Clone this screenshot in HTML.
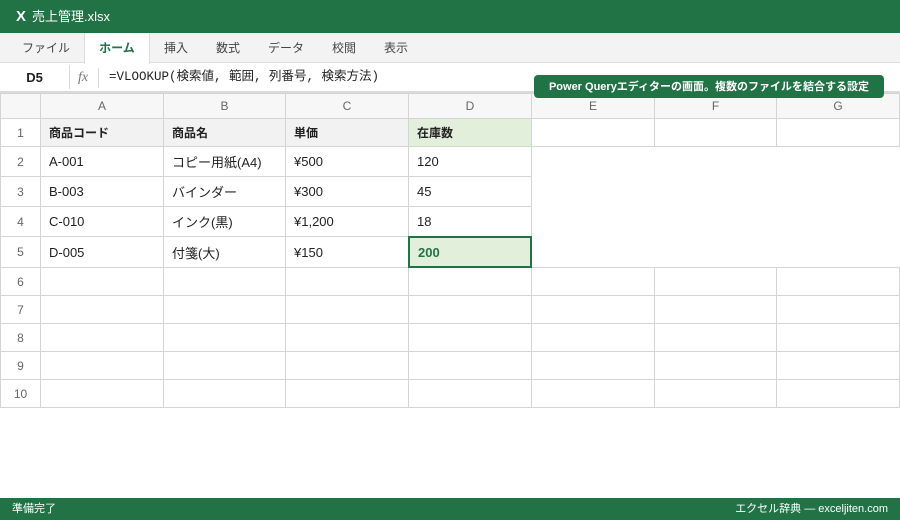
<!DOCTYPE html>
<html><head><meta charset="utf-8"><style>
*{margin:0;padding:0;box-sizing:border-box}
body{width:900px;height:520px;overflow:hidden;background:#fff;font-family:"Liberation Sans","Noto Sans CJK JP",sans-serif;position:relative;color:#222}
.title{position:absolute;left:0;top:0;width:900px;height:33px;background:#217346;color:#fff;font-size:13px;line-height:33px;padding-left:16px}
.title b{font-size:15px;margin-right:6px}
.tabs{position:absolute;top:33px;left:0;width:900px;height:30px;background:#f3f3f3;border-bottom:1px solid #dcdcdc;font-size:12px;color:#444}
.tab{position:absolute;top:0;height:30px;line-height:30px;text-align:center}
.tab.act{background:#fff;color:#217346;font-weight:bold;border-left:1px solid #dcdcdc;border-right:1px solid #dcdcdc;height:31px}
.fbar{position:absolute;top:63px;left:0;width:900px;height:30px;border-bottom:2px solid #dadada;font-size:13px;line-height:29px}
.nb{position:absolute;left:0;width:70px;text-align:center;font-weight:bold;border-right:1px solid #dadada;height:24px;top:2px;line-height:26px}
.fx{position:absolute;left:78px;font-style:italic;color:#777;font-family:"Liberation Serif",serif;font-size:14px}
.fxs{position:absolute;left:98px;top:5px;height:20px;border-left:1px solid #dadada}
.fm{position:absolute;left:109px;font-family:"Liberation Mono","Noto Sans CJK JP",monospace;font-size:12.5px}
.tip{position:absolute;left:534px;top:75px;width:350px;height:23px;background:#217346;color:#fff;border-radius:4px;font-size:11px;font-weight:bold;text-align:center;line-height:24px;z-index:5}
.c{position:absolute;border-right:1px solid #d4d4d4;border-bottom:1px solid #d4d4d4;font-size:13px;padding-left:8px;display:flex;align-items:center}
.h{background:#f7f7f7;color:#666;justify-content:center;padding:0;font-size:12px}
.status{position:absolute;left:0;top:498px;width:900px;height:22px;background:#217346;color:#fff;font-size:11px;line-height:23px;padding:0 12px}
</style></head><body>
<div class="title"><b>X</b>売上管理.xlsx</div>
<div class="tabs">
<div class="tab" style="left:10px;width:72px">ファイル</div>
<div class="tab act" style="left:84px;width:66px">ホーム</div>
<div class="tab" style="left:152px;width:48px">挿入</div>
<div class="tab" style="left:204px;width:48px">数式</div>
<div class="tab" style="left:258px;width:56px">データ</div>
<div class="tab" style="left:320px;width:48px">校閲</div>
<div class="tab" style="left:372px;width:48px">表示</div>
</div>
<div class="fbar"><div class="nb">D5</div><div class="fx">fx</div><div class="fxs"></div><div class="fm">=VLOOKUP(検索値, 範囲, 列番号, 検索方法)</div></div>
<div class="tip">Power Queryエディターの画面。複数のファイルを結合する設定</div>
<div style="position:absolute;left:0;top:93px;width:900px;height:315px;border-left:1px solid #d4d4d4;border-top:1px solid #d4d4d4"></div>
<script>
var xs=[0,40,163,285,408,531,654,776,899],ys=[93,118,146,176,206,236,267,295,323,351,379,407];
var data=[["商品コード","商品名","単価","在庫数"],["A-001","コピー用紙(A4)","¥500","120"],["B-003","バインダー","¥300","45"],["C-010","インク(黒)","¥1,200","18"],["D-005","付箋(大)","¥150","200"]];
var h="";
function cell(c,r,txt,st,cls){h+='<div class="c '+(cls||"")+'" style="left:'+(xs[c]+1)+'px;top:'+(ys[r]+1)+'px;width:'+(xs[c+1]-xs[c])+'px;height:'+(ys[r+1]-ys[r])+'px;'+(st||"")+'">'+txt+'</div>';}
cell(0,0,"","","h");
"ABCDEFG".split("").forEach(function(l,i){cell(i+1,0,l,"","h")});
for(var r=1;r<=10;r++){
 cell(0,r,r,"background:#fff;color:#666","h");
 for(var c=1;c<=7;c++){
  if(r>=2&&r<=5&&c>=5) continue;
  var t="",st="";
  if(r<=5&&c<=4)t=data[r-1][c-1];
  if(r==1){st="font-weight:bold;font-size:12px;background:"+(c==4?"#e2efda":(c<=3?"#f2f2f2":"#fff"));}
  if(r==6&&c>=5)st="border-top:1px solid #d4d4d4;top:"+ys[r]+"px;height:"+(ys[r+1]-ys[r]+1)+"px";
  if(r==5&&c==4)st="background:#e2efda;border:2px solid #217346;color:#217346;font-weight:bold;left:408px;top:236px;width:124px;height:32px;z-index:2";
  cell(c,r,t,st);
 }
}
document.body.insertAdjacentHTML("beforeend",h);
</script>
<div class="status"><span>準備完了</span><span style="float:right">エクセル辞典 ― exceljiten.com</span></div>
</body></html>
